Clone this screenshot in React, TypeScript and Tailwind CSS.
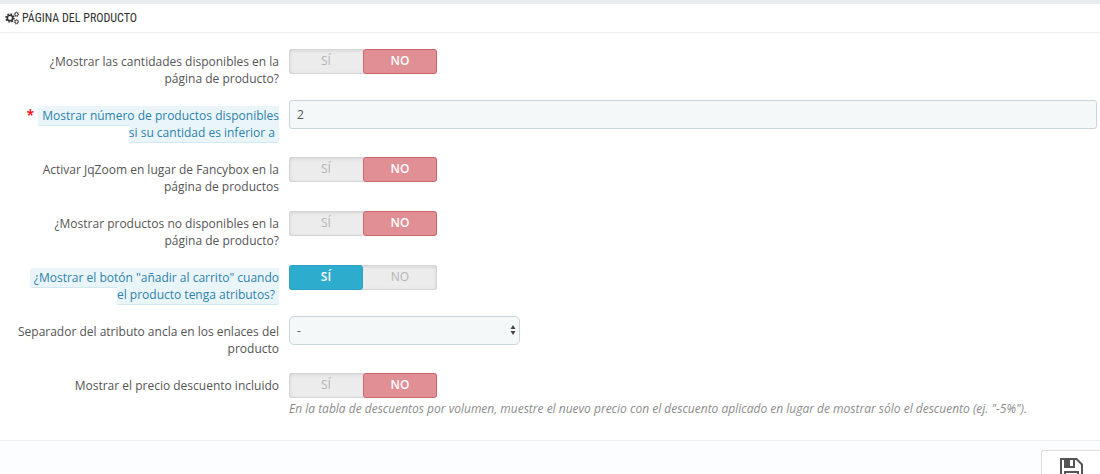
import { useState, type ReactNode } from "react";

function CogsIcon() {
  return (
    <svg viewBox="0 0 28 28" className="h-[14px] w-[14px] shrink-0" fill="none" stroke="currentColor" aria-hidden="true">
      <circle cx="10" cy="14" r="5.500" strokeWidth="3.400" />
      <circle cx="10" cy="14" r="8" strokeWidth="3" strokeDasharray="3.2 3.08" />
      <circle cx="23" cy="6.500" r="3.200" strokeWidth="2" />
      <circle cx="23" cy="6.500" r="4.600" strokeWidth="1.600" strokeDasharray="2 1.610" />
      <circle cx="23" cy="21.500" r="3.200" strokeWidth="2" />
      <circle cx="23" cy="21.500" r="4.600" strokeWidth="1.600" strokeDasharray="2 1.610" />
    </svg>
  );
}

function SaveIcon() {
  return (
    <svg viewBox="0 0 23 23" className="h-[23px] w-[23px]" fill="none" stroke="currentColor" strokeWidth="2" aria-hidden="true">
      <path d="M1 1H16.500L22 6.500V22H1Z" />
      <path d="M5 1V9H14V1" />
      <path d="M5 1H10V9H5Z" fill="currentColor" stroke="none" />
      <path d="M5 22V14H18V22" />
    </svg>
  );
}

function Switch({ name, label, initial = false }: { name: string; label: string; initial?: boolean }) {
  const [on, setOn] = useState(initial);
  const base = "flex w-1/2 cursor-pointer items-center justify-center rounded-[3px] border pb-px text-xs";
  const idle = " border-transparent text-[#b5b5b5]";
  return (
    <div
      role="radiogroup"
      aria-label={label}
      className="mt-[3px] flex h-[25px] w-[148px] rounded-[3px] bg-[#ececec] shadow-[inset_0_0_0_1px_#d5d5d5,inset_0_1px_4px_rgba(0,0,0,0.15)]"
    >
      <label className={base + (on ? " border-[#2ba2c4] bg-[#2eacce] font-semibold text-white" : idle)}>
        <input type="radio" name={name} className="sr-only" checked={on} onChange={() => setOn(true)} />
        SÍ
      </label>
      <label className={base + (on ? idle : " border-[#d0646b] bg-[#e08f95] font-semibold text-white")}>
        <input type="radio" name={name} className="sr-only" checked={!on} onChange={() => setOn(false)} />
        NO
      </label>
    </div>
  );
}

function Row({ label, children }: { label: ReactNode; children: ReactNode }) {
  return (
    <div className="grid grid-cols-[279px_1fr] gap-x-[10px]">
      <div className="pt-[7px] text-right leading-[17px]">{label}</div>
      <div className="min-w-0">{children}</div>
    </div>
  );
}

const tip = "rounded-[3px] border-b border-[#d3e8f1] bg-[#eaf5fa] px-1 py-px text-[#2c82ac]";

export default function App() {
  const [amount, setAmount] = useState("2");
  return (
    <main className="border-t-4 border-[#e9ebee] bg-white font-['Open_Sans',sans-serif] text-xs text-[#555]">
      <h1 className="flex h-[29px] items-center gap-[3px] border-b border-[#eee] pl-[5px] font-['Roboto_Condensed','Open_Sans_Condensed',sans-serif] text-xs font-normal text-[#333]">
        <CogsIcon />
        PÁGINA DEL PRODUCTO
      </h1>
      <form className="pt-[13px]" onSubmit={(e) => e.preventDefault()}>
        <div className="flex flex-col gap-[13px] pr-[3px]">
          <Row label={<>¿Mostrar las cantidades disponibles en la<br />página de producto?</>}>
            <Switch name="quantities" label="¿Mostrar las cantidades disponibles en la página de producto?" />
          </Row>
          <Row
            label={
              <label htmlFor="amount">
                <span className="pr-1 text-sm leading-none font-semibold text-[#f00]">*</span>
                <span className={tip}>Mostrar número de productos disponibles<br />si su cantidad es inferior a</span>
              </label>
            }
          >
            <input
              id="amount"
              value={amount}
              onChange={(e) => setAmount(e.target.value)}
              className="block h-[29px] w-full rounded-[3px] border border-[#c7d6db] bg-[#f5f8f9] px-[7px] text-xs text-[#555]"
            />
          </Row>
          <Row label={<>Activar JqZoom en lugar de Fancybox en la<br />página de productos</>}>
            <Switch name="jqzoom" label="Activar JqZoom en lugar de Fancybox en la página de productos" />
          </Row>
          <Row label={<>¿Mostrar productos no disponibles en la<br />página de producto?</>}>
            <Switch name="unavailable" label="¿Mostrar productos no disponibles en la página de producto?" />
          </Row>
          <Row
            label={
              <span className={tip}>¿Mostrar el botón "añadir al carrito" cuando<br />el producto tenga atributos?</span>
            }
          >
            <Switch name="cart" label='¿Mostrar el botón "añadir al carrito" cuando el producto tenga atributos?' initial />
          </Row>
          <Row label={<label htmlFor="separator">Separador del atributo ancla en los enlaces del<br />producto</label>}>
            <div className="relative w-[231px]">
              <select
                id="separator"
                className="block h-[29px] w-full appearance-none rounded-[5px] border border-[#c7d6db] bg-[#f5f8f9] px-[7px] text-xs text-[#555]"
              >
                <option>-</option>
                <option>,</option>
              </select>
              <svg viewBox="0 0 6 10" className="pointer-events-none absolute top-[9px] right-1 h-[10px] w-[6px]" fill="#444" aria-hidden="true">
                <path d="M3 0L5.500 4H.5ZM3 10L.5 6H5.500Z" />
              </svg>
            </div>
          </Row>
          <Row label="Mostrar el precio descuento incluido">
            <Switch name="discount" label="Mostrar el precio descuento incluido" />
            <p className="mt-[3px] text-xs leading-4 text-[#8c8c8c] italic">
              En la tabla de descuentos por volumen, muestre el nuevo precio con el descuento aplicado en lugar de mostrar sólo el descuento (ej. "-5%").
            </p>
          </Row>
        </div>
        <footer className="mt-[23px] flex justify-end border-t border-[#eee] bg-[#fcfdfe] pt-[9px]">
          <button
            type="submit"
            aria-label="Guardar"
            className="flex h-[60px] w-[59px] justify-center rounded-tl-[3px] border-t border-l border-[#ddd] bg-white pt-[7px] text-[#555]"
          >
            <SaveIcon />
          </button>
        </footer>
      </form>
    </main>
  );
}
